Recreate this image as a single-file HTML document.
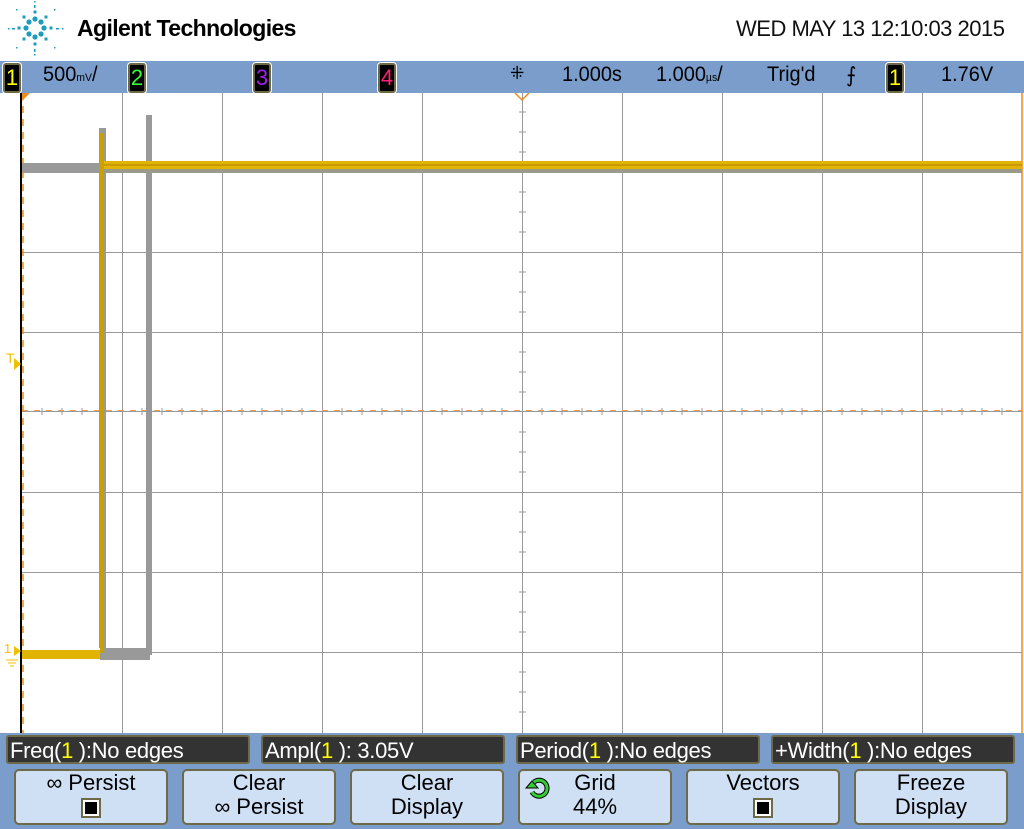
<!DOCTYPE html>
<html><head><style>
body{margin:0;width:1024px;height:829px;background:#fff;overflow:hidden;font-family:"Liberation Sans",sans-serif;position:relative}
.a{position:absolute}
.bar{left:0;top:61px;width:1024px;height:32px;background:#7b9dcb}
.t{font-size:21px;color:#000;top:63px;white-space:nowrap;transform:scaleX(0.95);transform-origin:left}
.ch{top:63px;width:14px;height:26px;background:#000;border:2px solid #6e6a48;border-radius:3px;font-size:22px;line-height:26px;text-align:center;box-shadow:0 0 0 1px #fff}
.bot{left:0;top:733px;width:1024px;height:96px;background:#7b9dcb}
.m{top:735px;height:29px;background:#333;border:2px solid #6e6a48;border-radius:3px;color:#fff;font-size:22px;line-height:27px;padding-left:2px;box-sizing:border-box;white-space:nowrap;letter-spacing:-0.3px}
.y{color:#ff0}
.b{top:769px;height:56px;width:154px;background:#cfe0f5;border:2px solid #6e6a48;border-radius:5px;box-sizing:border-box;text-align:center;font-size:22px;line-height:24px;color:#000;padding-top:0px}
.cb{display:inline-block;width:16px;height:16px;border:2px solid #6e6a48;background:#fff;position:relative;vertical-align:top;margin-top:3px}
.cb:after{content:"";position:absolute;left:2px;top:2px;width:12px;height:12px;background:#000}
</style></head><body>
<svg class="a" style="left:0;top:0" width="70" height="58" fill="#1e9bbd">
<g><circle cx="29" cy="22" r="2.6"/><circle cx="35" cy="19" r="2.6"/><circle cx="41" cy="22" r="2.6"/><circle cx="26" cy="28" r="2.6"/><circle cx="44" cy="28" r="2.6"/><circle cx="29" cy="34" r="2.6"/><circle cx="35" cy="37" r="2.6"/><circle cx="41" cy="34" r="2.6"/>
<rect x="33.5" y="10.5" width="3" height="3"/><rect x="22.5" y="15.5" width="3" height="3"/><rect x="44.5" y="15.5" width="3" height="3"/><rect x="17.5" y="26.5" width="3" height="3"/><rect x="49.5" y="26.5" width="3" height="3"/><rect x="22.5" y="37.5" width="3" height="3"/><rect x="44.5" y="37.5" width="3" height="3"/><rect x="33.5" y="42.5" width="3" height="3"/>
<rect x="34" y="5" width="1.5" height="3"/><rect x="34" y="49" width="1.5" height="3"/><rect x="34" y="1" width="1.5" height="1.5"/><rect x="34" y="54" width="1.5" height="1.5"/><rect x="8" y="28" width="1.5" height="1.5"/><rect x="12" y="28" width="3" height="1.5"/><rect x="56" y="28" width="3" height="1.5"/><rect x="62" y="28" width="1.5" height="1.5"/><rect x="16" y="9" width="1.5" height="1.5"/><rect x="54" y="9" width="1.5" height="1.5"/><rect x="16" y="47" width="1.5" height="1.5"/><rect x="54" y="47" width="1.5" height="1.5"/></g></svg>
<div class="a" style="left:77px;top:15px;font-size:23px;font-weight:bold;letter-spacing:-0.6px">Agilent Technologies</div>
<div class="a" style="left:736px;top:16px;font-size:22px;color:#111;letter-spacing:-0.5px">WED MAY 13 12:10:03 2015</div>
<div class="a bar"></div>
<div class="a ch" style="left:3px;color:#ff0">1</div>
<div class="a t" style="left:43px">500<span style="font-size:11px">mV</span>/</div>
<div class="a ch" style="left:128px;color:#3f3">2</div>
<div class="a ch" style="left:253px;color:#a020f0">3</div>
<div class="a ch" style="left:378px;color:#ff1e78">4</div>
<div class="a t" style="left:510px;font-size:18px">⁜</div>
<div class="a t" style="left:562px">1.000s</div>
<div class="a t" style="left:656px">1.000<span style="font-size:11px">µs</span>/</div>
<div class="a t" style="left:767px">Trig'd</div>
<div class="a t" style="left:846px">⨍</div>
<div class="a ch" style="left:886px;color:#ff0">1</div>
<div class="a t" style="left:941px">1.76V</div>
<svg class="a" style="left:0;top:93px" width="1024" height="640">
<g stroke="#999" stroke-width="1">
<path d="M122.5 0V640M222.5 0V640M322.5 0V640M422.5 0V640M622.5 0V640M722.5 0V640M822.5 0V640M922.5 0V640M22 79.5H1022M22 159.5H1022M22 239.5H1022M22 399.5H1022M22 479.5H1022M22 559.5H1022"/>
</g>
<path d="M22 318.5H1022M522.5 0V640" stroke="#999" stroke-width="1"/>
<path d="M42 315v7M62 315v7M82 315v7M102 315v7M142 315v7M162 315v7M182 315v7M202 315v7M242 315v7M262 315v7M282 315v7M302 315v7M342 315v7M362 315v7M382 315v7M402 315v7M442 315v7M462 315v7M482 315v7M502 315v7M542 315v7M562 315v7M582 315v7M602 315v7M642 315v7M662 315v7M682 315v7M702 315v7M742 315v7M762 315v7M782 315v7M802 315v7M842 315v7M862 315v7M882 315v7M902 315v7M942 315v7M962 315v7M982 315v7M1002 315v7M519 19h7M519 39h7M519 59h7M519 99h7M519 119h7M519 139h7M519 179h7M519 199h7M519 219h7M519 259h7M519 279h7M519 299h7M519 339h7M519 359h7M519 379h7M519 419h7M519 439h7M519 459h7M519 499h7M519 519h7M519 539h7M519 579h7M519 599h7M519 619h7" stroke="#999"/>
<path d="M22 317.5H1022" stroke="#f0a050" stroke-width="1" stroke-dasharray="6 6"/>
<path d="M21 0V640" stroke="#000" stroke-width="2"/>
<path d="M23 0V640" stroke="#f08c1e" stroke-width="1.5" stroke-dasharray="7 6"/>
<path d="M22 0h8l-8 8z" fill="#f08c1e"/>
<path d="M515 0l7 7 7-7" stroke="#f08c1e" fill="none" stroke-width="1.5"/>
<path d="M1022 0V640" stroke="#f08c1e" stroke-width="1.5"/>
<rect x="22" y="70" width="80" height="9" fill="#999"/>
<rect x="100" y="555" width="50" height="12" fill="#999"/>
<rect x="99" y="35" width="7" height="520" fill="#999"/>
<rect x="146" y="22" width="6" height="540" fill="#999"/>
<rect x="104" y="68" width="918" height="12" fill="#9a9a8a"/>
<rect x="22" y="557" width="78" height="9" fill="#e0b400"/>
<rect x="100" y="40" width="3" height="520" fill="#c8a000"/>
<rect x="104" y="68" width="918" height="8" fill="#e0b400"/>
<rect x="104" y="71" width="918" height="2" fill="#c99b00"/>
<text x="6" y="270" fill="#f0c000" font-size="14" font-family="Liberation Sans">T</text>
<path d="M14 265l7 6-7 6z" fill="#f0c000"/>
<text x="4" y="560" fill="#f0c000" font-size="13" font-family="Liberation Sans">1</text>
<path d="M14 553l7 5-7 5z" fill="#f0c000"/>
<path d="M6 567h12M8 570h8M10 573h4" stroke="#f0c000"/>
</svg>
<div class="a bot"></div>
<div class="a m" style="left:6px;width:244px">Freq(<span class="y">1</span> ):No edges</div>
<div class="a m" style="left:261px;width:244px">Ampl(<span class="y">1</span> ): 3.05V</div>
<div class="a m" style="left:516px;width:244px">Period(<span class="y">1</span> ):No edges</div>
<div class="a m" style="left:771px;width:244px">+Width(<span class="y">1</span> ):No edges</div>
<div class="a b" style="left:14px">∞ Persist<br><span class="cb"></span></div>
<div class="a b" style="left:182px">Clear<br>∞ Persist</div>
<div class="a b" style="left:350px">Clear<br>Display</div>
<div class="a b" style="left:518px">Grid<br>44%
<svg class="a" style="left:5px;top:5px" width="26" height="24"><path d="M9 6a8 8 0 1 1-2 10" stroke="#000" stroke-width="5" fill="none"/><path d="M9 6a8 8 0 1 1-2 10" stroke="#3c3" stroke-width="3" fill="none"/><path d="M1 12l6-7 6 7z" fill="#3c3" stroke="#000"/></svg></div>
<div class="a b" style="left:686px">Vectors<br><span class="cb"></span></div>
<div class="a b" style="left:854px">Freeze<br>Display</div>
</body></html>
